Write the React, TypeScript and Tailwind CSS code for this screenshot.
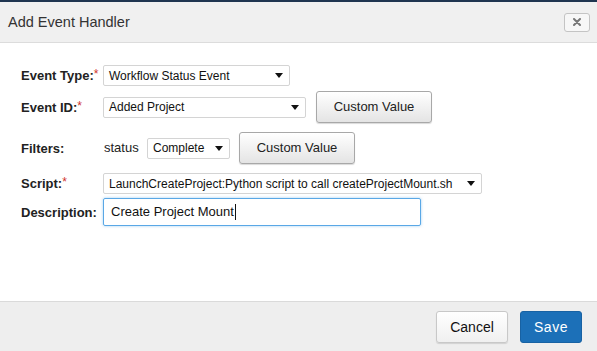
import React from "react";

const Arrow = () => (
  <svg width="8" height="5" viewBox="0 0 8 5" className="shrink-0">
    <path d="M0 0 L8 0 L4 5 Z" fill="#111" />
  </svg>
);

function Select({ w, text }: { w: string; text: string }) {
  return (
    <div
      className={`${w} h-[21px] flex items-center justify-between border border-[#d4d4d4] rounded-[2px] bg-white pl-[5px] pr-[6px] text-[12px] text-[#111]`}
    >
      <span className="whitespace-nowrap leading-none">{text}</span>
      <Arrow />
    </div>
  );
}

function GrayButton({ children, cls }: { children: React.ReactNode; cls: string }) {
  return (
    <div
      className={`${cls} h-[32px] flex items-center justify-center border border-[#a8a8a8] rounded-[3px] bg-gradient-to-b from-[#ffffff] to-[#e4e4e4] text-[13px] text-[#222] shadow-[0_1px_1px_rgba(0,0,0,0.15)]`}
    >
      {children}
    </div>
  );
}

function Label({ text, req }: { text: string; req?: boolean }) {
  return (
    <div className="w-[82px] shrink-0 text-[13px] font-bold text-[#222] leading-none flex items-start">
      <span>{text}</span>
      {req && <span className="text-[#d0342c] font-normal text-[12px] leading-none -mt-[1px]">*</span>}
    </div>
  );
}

export default function App() {
  return (
    <div
      className="w-[597px] h-[351px] flex flex-col bg-white overflow-hidden"
      style={{ fontFamily: '"Liberation Sans", Arial, sans-serif' }}
    >
      <div className="h-[2px] bg-[#1f3550]" />
      <div className="h-[41px] bg-[#f0f0f0] border-b border-[#dcdcdc] flex items-center justify-between pl-[8px] pr-[7px]">
        <span className="text-[14.5px] text-[#333] leading-none mt-[1px]">Add Event Handler</span>
        <div className="w-[26px] h-[19px] border border-[#c4c4c4] rounded-[3px] bg-[#f7f7f7] flex items-center justify-center">
          <svg width="8" height="8" viewBox="0 0 8 8">
            <path d="M1 1 L7 7 M7 1 L1 7" stroke="#777" strokeWidth="2" strokeLinecap="round" />
          </svg>
        </div>
      </div>

      <div className="flex-1 flex flex-col pl-[21px] pt-[22px]">
        <div className="flex items-center h-[21px]">
          <Label text="Event Type:" req />
          <Select w="w-[187px]" text="Workflow Status Event" />
        </div>
        <div className="flex items-center h-[32px] mt-[5px]">
          <Label text="Event ID:" req />
          <Select w="w-[203px]" text="Added Project" />
          <GrayButton cls="ml-[10px] w-[116px]">Custom Value</GrayButton>
        </div>
        <div className="flex items-center h-[32px] mt-[9px]">
          <Label text="Filters:" />
          <span className="text-[13px] text-[#222] ml-[1px] w-[43px]">status</span>
          <Select w="w-[83px]" text="Complete" />
          <GrayButton cls="ml-[9px] w-[116px]">Custom Value</GrayButton>
        </div>
        <div className="flex items-center h-[21px] mt-[9px]">
          <Label text="Script:" req />
          <Select w="w-[379px]" text="LaunchCreateProject:Python script to call createProjectMount.sh" />
        </div>
        <div className="flex items-center h-[28px] mt-[4px]">
          <Label text="Description:" />
          <div className="w-[318px] h-[28px] border border-[#5aa8e6] rounded-[2px] shadow-[0_0_3px_rgba(102,175,233,0.6)] flex items-center pl-[7px] text-[13px] text-[#111]">
            <span>Create Project Mount</span>
            <span className="w-[1px] h-[16px] bg-[#111] ml-[1px]" />
          </div>
        </div>
      </div>

      <div className="h-[50px] bg-[#eeeeee] border-t border-[#dadada] flex items-start justify-end pt-[9px] pr-[15px] gap-[12px]">
        <div className="w-[72px] h-[32px] border border-[#c8c8c8] rounded-[3px] bg-gradient-to-b from-[#ffffff] to-[#f0f0f0] flex items-center justify-center text-[14px] text-[#111] shadow-[0_1px_1px_rgba(0,0,0,0.12)]">
          Cancel
        </div>
        <div className="w-[62px] h-[32px] rounded-[3px] bg-[#1c70b8] border border-[#1862a3] flex items-center justify-center text-[14px] text-white tracking-[0.5px]">
          Save
        </div>
      </div>
    </div>
  );
}
